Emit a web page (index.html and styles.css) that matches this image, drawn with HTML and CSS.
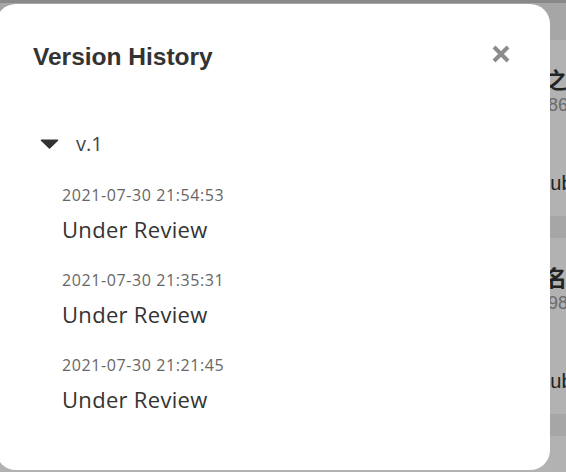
FILE: index.html
```html
<!DOCTYPE html>
<html lang="en">
<head>
<meta charset="utf-8">
<title>Version History</title>
<link rel="stylesheet" href="styles.css">
</head>
<body>
<div class="page">
  <div class="topbar"></div>
  <div class="list">
    <div class="card">
      <div class="c-title">测试之</div>
      <div class="c-id">1086</div>
      <div class="c-link">Publish</div>
    </div>
    <div class="card">
      <div class="c-title">测试名</div>
      <div class="c-id">1098</div>
      <div class="c-link">Publish</div>
    </div>
    <div class="card card-last"></div>
  </div>
</div>
<div class="overlay"></div>
<div class="modal">
  <div class="modal-head">
    <h2 class="modal-title">Version History</h2>
    <button class="close" aria-label="Close">
      <svg viewBox="0 0 18 18" width="18" height="18"><path d="M2 2L16 16M16 2L2 16" stroke="#8c8c8c" stroke-width="4" fill="none"/></svg>
    </button>
  </div>
  <div class="version">
    <div class="version-row">
      <svg class="caret" viewBox="0 0 19 10" width="19" height="10"><path d="M1.5 1.2H17.5L9.5 9Z" fill="#333" stroke="#333" stroke-width="1.6" stroke-linejoin="round"/></svg>
      <span class="version-label">v.1</span>
    </div>
    <ul class="entries">
      <li class="entry">
        <div class="entry-time">2021-07-30 21:54:53</div>
        <div class="entry-status">Under Review</div>
      </li>
      <li class="entry">
        <div class="entry-time">2021-07-30 21:35:31</div>
        <div class="entry-status">Under Review</div>
      </li>
      <li class="entry">
        <div class="entry-time">2021-07-30 21:21:45</div>
        <div class="entry-status">Under Review</div>
      </li>
    </ul>
  </div>
</div>
</body>
</html>
```
FILE: styles.css
```css
html, body {
  margin: 0;
  padding: 0;
}
body {
  width: 566px;
  height: 472px;
  overflow: hidden;
  background: #eeeeee;
  font-family: "Open Sans", "Noto Sans", "Noto Sans CJK SC", sans-serif;
}
.page {
  width: 566px;
  height: 472px;
  overflow: hidden;
}
.topbar {
  height: 3px;
  background: #c4c4c4;
}
.list {
  padding-top: 37px;
  display: flex;
  flex-direction: column;
  gap: 22px;
}
.card {
  background: #ffffff;
  height: 176px;
  box-sizing: border-box;
  padding-top: 26px;
  white-space: nowrap;
  overflow: hidden;
}
.card-last {
  height: 40px;
}
.c-title {
  font: 700 22px/24px "Noto Sans CJK SC", sans-serif;
  color: #333;
  padding-left: 501px;
}
.c-id {
  font: 18px/22px "Liberation Sans", Arial, sans-serif;
  color: #999;
  padding-left: 528px;
  margin-top: 4px;
}
.c-link {
  font: 20px/24px "Liberation Sans", Arial, sans-serif;
  color: #333;
  padding-left: 537px;
  margin-top: 55px;
}
.overlay {
  position: fixed;
  inset: 0;
  background: rgba(0, 0, 0, 0.3);
}
.modal {
  position: fixed;
  left: -4px;
  top: 4px;
  width: 554px;
  height: 466px;
  background: #ffffff;
  border-radius: 20px;
  box-sizing: border-box;
  padding: 39px 40px 0 37px;
}
.modal-head {
  display: flex;
  justify-content: space-between;
  align-items: flex-start;
}
.modal-title {
  margin: 0;
  font: 700 24.5px/28px "Liberation Sans", Arial, sans-serif;
  color: #333;
}
.close {
  border: 0;
  background: none;
  padding: 0;
  margin-top: 2px;
  width: 18px;
  height: 18px;
  display: block;
}
.close svg {
  display: block;
}
.version {
  margin-top: 59px;
}
.version-row {
  display: flex;
  align-items: center;
  height: 28px;
}
.caret {
  display: block;
  margin-left: 7px;
  margin-right: 17px;
}
.version-label {
  font-size: 20px;
  line-height: 28px;
  color: #444;
}
.entries {
  list-style: none;
  margin: 0;
  padding: 0 0 0 29px;
}
.entry {
  margin-top: 27px;
}
.entry-time {
  font-size: 16px;
  line-height: 20px;
  letter-spacing: 0.6px;
  color: #666;
}
.entry-status {
  font-size: 22px;
  line-height: 28px;
  letter-spacing: 0.3px;
  color: #333;
  margin-top: 10px;
}
```
